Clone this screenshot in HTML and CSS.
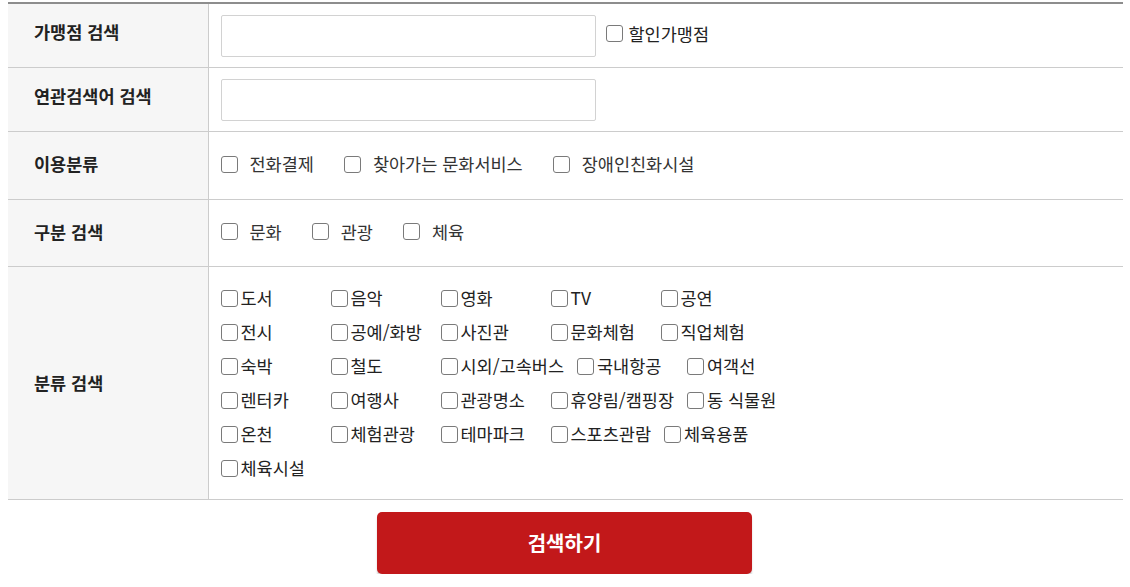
FILE: index.html
```html
<!DOCTYPE html>
<html lang="ko">
<head>
<meta charset="utf-8">
<title>검색</title>
<link rel="stylesheet" href="styles.css">
</head>
<body>
<form class="search-form">
  <table class="search-table">
    <tr class="row-input">
      <th class="label">가맹점 검색</th>
      <td class="field">
        <div class="inline">
          <input class="text-input" type="text">
          <label class="chk chk-tight"><input type="checkbox"><span>할인가맹점</span></label>
        </div>
      </td>
    </tr>
    <tr class="row-input">
      <th class="label">연관검색어 검색</th>
      <td class="field">
        <input class="text-input" type="text">
      </td>
    </tr>
    <tr class="row-check row-a">
      <th class="label">이용분류</th>
      <td class="field">
        <div class="options">
          <label class="chk"><input type="checkbox"><span>전화결제</span></label>
          <label class="chk"><input type="checkbox"><span>찾아가는 문화서비스</span></label>
          <label class="chk"><input type="checkbox"><span>장애인친화시설</span></label>
        </div>
      </td>
    </tr>
    <tr class="row-check row-b">
      <th class="label">구분 검색</th>
      <td class="field">
        <div class="options">
          <label class="chk"><input type="checkbox"><span>문화</span></label>
          <label class="chk"><input type="checkbox"><span>관광</span></label>
          <label class="chk"><input type="checkbox"><span>체육</span></label>
        </div>
      </td>
    </tr>
    <tr class="row-cat">
      <th class="label">분류 검색</th>
      <td class="field">
        <div class="cat-line">
          <label class="cat"><input type="checkbox"><span>도서</span></label>
          <label class="cat"><input type="checkbox"><span>음악</span></label>
          <label class="cat"><input type="checkbox"><span>영화</span></label>
          <label class="cat"><input type="checkbox"><span>TV</span></label>
          <label class="cat"><input type="checkbox"><span>공연</span></label>
        </div>
        <div class="cat-line">
          <label class="cat"><input type="checkbox"><span>전시</span></label>
          <label class="cat"><input type="checkbox"><span>공예/화방</span></label>
          <label class="cat"><input type="checkbox"><span>사진관</span></label>
          <label class="cat"><input type="checkbox"><span>문화체험</span></label>
          <label class="cat"><input type="checkbox"><span>직업체험</span></label>
        </div>
        <div class="cat-line">
          <label class="cat"><input type="checkbox"><span>숙박</span></label>
          <label class="cat"><input type="checkbox"><span>철도</span></label>
          <label class="cat"><input type="checkbox"><span>시외/고속버스</span></label>
          <label class="cat"><input type="checkbox"><span>국내항공</span></label>
          <label class="cat"><input type="checkbox"><span>여객선</span></label>
        </div>
        <div class="cat-line">
          <label class="cat"><input type="checkbox"><span>렌터카</span></label>
          <label class="cat"><input type="checkbox"><span>여행사</span></label>
          <label class="cat"><input type="checkbox"><span>관광명소</span></label>
          <label class="cat"><input type="checkbox"><span>휴양림/캠핑장</span></label>
          <label class="cat"><input type="checkbox"><span>동 식물원</span></label>
        </div>
        <div class="cat-line">
          <label class="cat"><input type="checkbox"><span>온천</span></label>
          <label class="cat"><input type="checkbox"><span>체험관광</span></label>
          <label class="cat"><input type="checkbox"><span>테마파크</span></label>
          <label class="cat"><input type="checkbox"><span>스포츠관람</span></label>
          <label class="cat"><input type="checkbox"><span>체육용품</span></label>
        </div>
        <div class="cat-line">
          <label class="cat"><input type="checkbox"><span>체육시설</span></label>
        </div>
      </td>
    </tr>
  </table>
  <div class="actions">
    <button class="submit" type="button">검색하기</button>
  </div>
</form>
</body>
</html>
```
FILE: styles.css
```css
html, body {
  background: #ffffff;
}
body {
  margin: 2px 7px 0 8px;
  font-family: "Noto Sans CJK KR", "Noto Sans", sans-serif;
  font-size: 17.5px;
  color: #333333;
}
.search-form {
  margin: 0;
}
.search-table {
  width: 100%;
  border-collapse: collapse;
  border-top: 2px solid #8d8d8d;
}
.search-table tr {
  border-bottom: 1px solid #cccccc;
}
.label {
  width: 200px;
  box-sizing: border-box;
  background: #f6f6f6;
  border-right: 1px solid #cccccc;
  text-align: left;
  padding: 0 0 0 26px;
  font-weight: 700;
  font-size: 17.5px;
  line-height: 22px;
  color: #222222;
  vertical-align: middle;
}
.row-input .label { padding-bottom: 7px; }
.row-check .label { padding-bottom: 3px; }
.field {
  padding: 0 0 0 12px;
  vertical-align: middle;
}
.row-input .field {
  height: 63px;
  box-sizing: border-box;
  padding-top: 11px;
  padding-bottom: 10px;
}
.row-a .field { height: 68px; box-sizing: border-box; padding-bottom: 3px; }
.row-b .field { height: 67px; box-sizing: border-box; padding-bottom: 3px; }
.row-cat .field {
  height: 231px;
  box-sizing: border-box;
  padding-top: 14px;
  padding-bottom: 14px;
}
.inline {
  display: flex;
  align-items: center;
}
.text-input {
  display: block;
  width: 375px;
  height: 42px;
  box-sizing: border-box;
  border: 1px solid #d2d2d2;
  border-radius: 2px;
  margin: 0;
  padding: 0 10px;
  font: inherit;
  background: #ffffff;
}
.chk, .cat {
  display: inline-flex;
  align-items: center;
  line-height: 22px;
  color: #333333;
}
.chk input, .cat input {
  appearance: none;
  -webkit-appearance: none;
  width: 17px;
  height: 17px;
  box-sizing: border-box;
  border: 1.5px solid #7a7a7a;
  border-radius: 3px;
  margin: 0;
  background: #ffffff;
  flex: none;
}
.chk span {
  margin-left: 12px;
}
.chk-tight {
  margin-left: 10px;
  margin-top: -5px;
}
.chk-tight span {
  margin-left: 6px;
  color: #222222;
}
.options {
  display: flex;
  align-items: center;
  gap: 30px;
}
.cat-line {
  display: flex;
  align-items: center;
  height: 34px;
}
.cat {
  min-width: 97px;
  padding-right: 13px;
}
.cat span {
  margin-left: 3px;
  color: #222222;
}
.actions {
  display: flex;
  justify-content: center;
  padding-top: 12px;
  padding-right: 2px;
}
.submit {
  width: 375px;
  height: 62px;
  border: none;
  border-radius: 5px;
  background: #c2181a;
  color: #ffffff;
  font-family: inherit;
  font-size: 20px;
  font-weight: 700;
  padding-bottom: 3px;
  box-shadow: 0 3px 2px rgba(0, 0, 0, 0.18);
  cursor: pointer;
}
```
